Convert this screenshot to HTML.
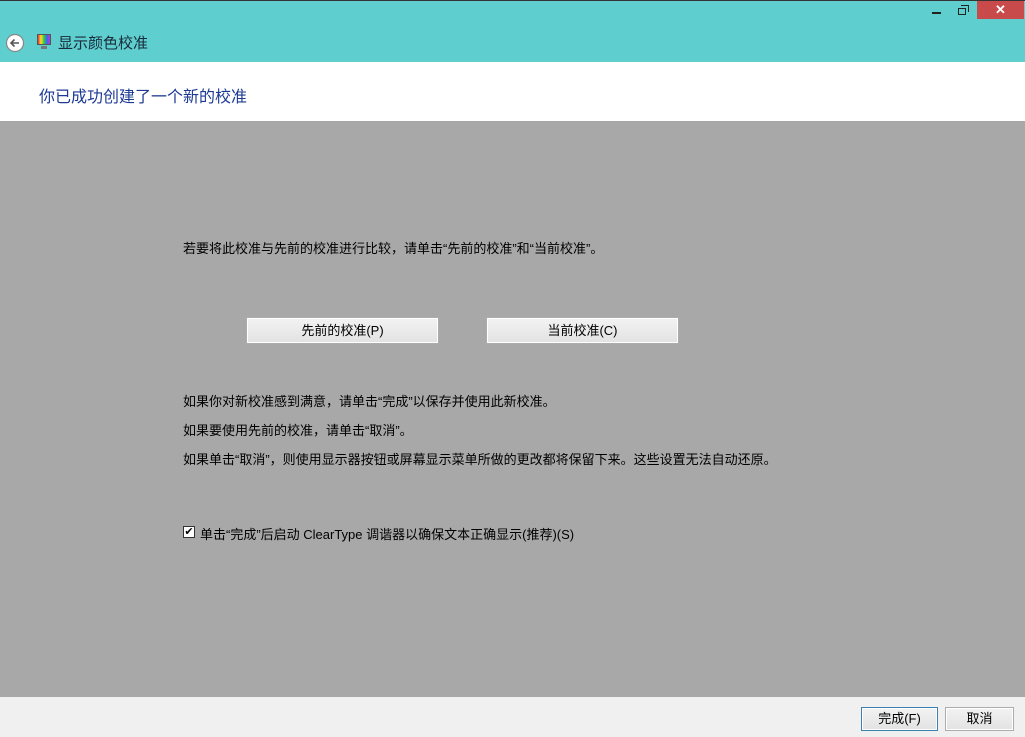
<!DOCTYPE html>
<html><head><meta charset="utf-8"><style>
*{margin:0;padding:0;box-sizing:border-box}
body{width:1025px;height:737px;overflow:hidden;position:relative;font-family:"Liberation Sans","Noto Sans CJK SC",sans-serif;background:#a8a8a8}
.title{position:absolute;left:0;top:0;width:1025px;height:62px;background:#5ecece;border-top:1px solid #333}
.hdr{position:absolute;left:0;top:62px;width:1025px;height:59px;background:#fff}
.foot{position:absolute;left:0;top:697px;width:1025px;height:40px;background:#f0f0f0}
.t{position:absolute;font-size:13px;color:#000;white-space:nowrap}
.btn{position:absolute;height:25px;border:1px solid #fff;outline:1px solid #acacac;background:linear-gradient(#f2f2f2,#e3e3e3);font-size:13px;text-align:center;line-height:23px;color:#000}
</style></head><body>
<div class="title">
 <svg style="position:absolute;left:5px;top:32px" width="20" height="20"><circle cx="10" cy="10" r="8.5" fill="#fff" stroke="#888" stroke-width="1.2"/><path d="M14 10H6M9.5 6.5L6 10l3.5 3.5" stroke="#555" stroke-width="1.6" fill="none"/></svg>
 <div style="position:absolute;left:37px;top:33px;width:14px;height:11px;background:linear-gradient(90deg,#e33,#fd3,#3c3,#36f,#c3c);border:1px solid #555"></div>
 <div style="position:absolute;left:41px;top:45px;width:6px;height:3px;background:#777"></div>
 <div class="t" style="left:58px;top:31px;font-size:15px;color:#1a2a3a">显示颜色校准</div>
 <div style="position:absolute;left:932px;top:11px;width:9px;height:2px;background:#222"></div>
 <div style="position:absolute;left:958px;top:7px;width:8px;height:7px;border:1.5px solid #222"></div>
 <div style="position:absolute;left:961px;top:4px;width:8px;height:7px;border-top:1.5px solid #222;border-right:1.5px solid #222"></div>
 <div style="position:absolute;left:977px;top:0;width:47px;height:18px;background:#c84a4a;color:#fff;text-align:center;font-size:13px;line-height:18px;font-weight:bold">✕</div>
</div>
<div class="hdr"><div class="t" style="left:39px;top:21px;font-size:16px;color:#1c3a94">你已成功创建了一个新的校准</div></div>
<div class="t" style="left:183px;top:238px">若要将此校准与先前的校准进行比较，请单击“先前的校准”和“当前校准”。</div>
<div class="btn" style="left:247px;top:318px;width:191px">先前的校准(P)</div>
<div class="btn" style="left:487px;top:318px;width:191px">当前校准(C)</div>
<div class="t" style="left:183px;top:391px">如果你对新校准感到满意，请单击“完成”以保存并使用此新校准。</div>
<div class="t" style="left:183px;top:420px">如果要使用先前的校准，请单击“取消”。</div>
<div class="t" style="left:183px;top:449px">如果单击“取消”，则使用显示器按钮或屏幕显示菜单所做的更改都将保留下来。这些设置无法自动还原。</div>
<div style="position:absolute;left:183px;top:526px;width:12px;height:12px;background:#fff;border:1px solid #333;font-size:11px;line-height:10px;text-align:center">✔</div>
<div class="t" style="left:200px;top:524px">单击“完成”后启动 ClearType 调谐器以确保文本正确显示(推荐)(S)</div>
<div class="foot">
 <div class="btn" style="left:862px;top:11px;width:75px;height:22px;line-height:20px;outline-color:#3c7fb1">完成(F)</div>
 <div class="btn" style="left:946px;top:11px;width:67px;height:22px;line-height:20px">取消</div>
</div>
</body></html>
